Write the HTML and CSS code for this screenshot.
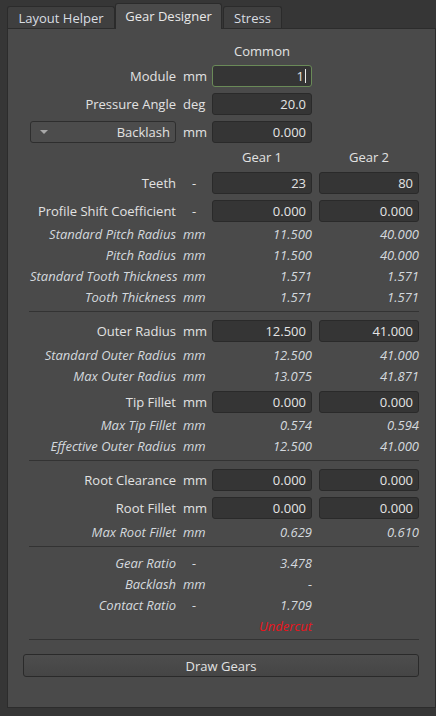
FILE: index.html
```html
<!DOCTYPE html>
<html>
<head>
<meta charset="utf-8">
<link rel="stylesheet" href="styles.css">
</head>
<body>
<div class="tabs">
  <div class="tab">Layout Helper</div>
  <div class="tab tab-active">Gear Designer</div>
  <div class="tab tab-small">Stress</div>
</div>
<div class="panel">
  <div class="row head mt12"><span class="c3">Common</span></div>
  <div class="row in mt4"><span class="lbl">Module</span><span class="unit">mm</span><div class="field focus">1<span class="caret"></span></div></div>
  <div class="row in mt6"><span class="lbl">Pressure Angle</span><span class="unit">deg</span><div class="field">20.0</div></div>
  <div class="row in mt6"><div class="combo"><span class="arrow"></span><span>Backlash</span></div><span class="unit">mm</span><div class="field">0.000</div></div>
  <div class="row head mt4"><span class="c3">Gear 1</span><span class="c4">Gear 2</span></div>
  <div class="row in mt5"><span class="lbl">Teeth</span><span class="unit">-</span><div class="field">23</div><div class="field">80</div></div>
  <div class="row in mt6"><span class="lbl">Profile Shift Coefficient</span><span class="unit">-</span><div class="field">0.000</div><div class="field">0.000</div></div>
  <div class="row ro mt1"><span class="lbl">Standard Pitch Radius</span><span class="unit">mm</span><span class="val">11.500</span><span class="val">40.000</span></div>
  <div class="row ro"><span class="lbl">Pitch Radius</span><span class="unit">mm</span><span class="val">11.500</span><span class="val">40.000</span></div>
  <div class="row ro"><span class="lbl">Standard Tooth Thickness</span><span class="unit">mm</span><span class="val">1.571</span><span class="val">1.571</span></div>
  <div class="row ro"><span class="lbl">Tooth Thickness</span><span class="unit">mm</span><span class="val">1.571</span><span class="val">1.571</span></div>
  <div class="sep mt4"></div>
  <div class="row in mt8"><span class="lbl">Outer Radius</span><span class="unit">mm</span><div class="field">12.500</div><div class="field">41.000</div></div>
  <div class="row ro mt2"><span class="lbl">Standard Outer Radius</span><span class="unit">mm</span><span class="val">12.500</span><span class="val">41.000</span></div>
  <div class="row ro"><span class="lbl">Max Outer Radius</span><span class="unit">mm</span><span class="val">13.075</span><span class="val">41.871</span></div>
  <div class="row in mt5"><span class="lbl">Tip Fillet</span><span class="unit">mm</span><div class="field">0.000</div><div class="field">0.000</div></div>
  <div class="row ro mt1"><span class="lbl">Max Tip Fillet</span><span class="unit">mm</span><span class="val">0.574</span><span class="val">0.594</span></div>
  <div class="row ro"><span class="lbl">Effective Outer Radius</span><span class="unit">mm</span><span class="val">12.500</span><span class="val">41.000</span></div>
  <div class="sep mt4"></div>
  <div class="row in mt8"><span class="lbl">Root Clearance</span><span class="unit">mm</span><div class="field">0.000</div><div class="field">0.000</div></div>
  <div class="row in mt6"><span class="lbl">Root Fillet</span><span class="unit">mm</span><div class="field">0.000</div><div class="field">0.000</div></div>
  <div class="row ro mt2"><span class="lbl">Max Root Fillet</span><span class="unit">mm</span><span class="val">0.629</span><span class="val">0.610</span></div>
  <div class="sep mt4"></div>
  <div class="row ro mt5"><span class="lbl">Gear Ratio</span><span class="unit">-</span><span class="val">3.478</span></div>
  <div class="row ro"><span class="lbl">Backlash</span><span class="unit">mm</span><span class="val">-</span></div>
  <div class="row ro"><span class="lbl">Contact Ratio</span><span class="unit">-</span><span class="val">1.709</span></div>
  <div class="row ro"><span class="lbl"></span><span class="unit"></span><span class="val warn">Undercut</span></div>
  <div class="sep mt3"></div>
  <div class="button">Draw Gears</div>
</div>
</body>
</html>
```
FILE: styles.css
```css
html, body {
  margin: 0;
  padding: 0;
}
body {
  background: #363636;
  width: 436px;
  height: 716px;
  overflow: hidden;
  font-family: "Open Sans", "Noto Sans", sans-serif;
  font-size: 13px;
  color: #e2e2e2;
}
.tabs {
  display: flex;
  align-items: flex-end;
  height: 28px;
  padding-left: 7px;
}
.tab {
  box-sizing: border-box;
  width: 108px;
  height: 22px;
  border: 1px solid #2b2b2b;
  border-bottom: none;
  border-radius: 3px 3px 0 0;
  background: #3f3f3f;
  color: #d9dde2;
  display: flex;
  align-items: center;
  justify-content: center;
  font-size: 13px;
}
.tab-active {
  width: 107px;
  background: #4a4a4a;
  color: #e8e8e8;
  margin-bottom: -1px;
  height: 26px;
  position: relative;
  z-index: 1;
  padding-bottom: 1px;
}
.tab-small {
  width: 59px;
  margin-left: 1px;
}
.panel {
  box-sizing: border-box;
  width: 429px;
  height: 680px;
  margin-left: 7px;
  border: 1px solid #2c2c2c;
  background: #4a4a4a;
  display: flex;
  flex-direction: column;
}
.row {
  display: grid;
  grid-template-columns: 146px 22px 100px 100px;
  column-gap: 7px;
  margin-left: 22px;
  align-items: center;
}
.row.in { height: 22px; }
.row.ro { height: 21px; font-style: italic; color: #d4d9de; }
.row.head { height: 20px; }
.c3 { grid-column: 3; text-align: center; }
.c4 { grid-column: 4; text-align: center; }
.lbl {
  grid-column: 1;
  text-align: right;
  white-space: nowrap;
}
.unit {
  grid-column: 2;
  text-align: center;
  white-space: nowrap;
}
.val {
  text-align: right;
  white-space: nowrap;
}
.warn {
  color: #e8141c;
  grid-column: 3;
}
.field {
  box-sizing: border-box;
  height: 22px;
  background: #353535;
  border: 1px solid #2a2a2a;
  border-radius: 3px;
  padding-right: 5px;
  display: flex;
  align-items: center;
  justify-content: flex-end;
  color: #e4e4e4;
}
.field.focus {
  border-color: #6a8a58;
}
.caret {
  display: inline-block;
  width: 1px;
  height: 14px;
  background: #e8e8e8;
  margin-left: 1px;
}
.combo {
  grid-column: 1;
  box-sizing: border-box;
  height: 22px;
  background: #4c4c4c;
  border: 1px solid #2e2e2e;
  border-radius: 3px;
  display: flex;
  align-items: center;
  justify-content: space-between;
  padding: 0 5px 0 9px;
}
.arrow {
  width: 0;
  height: 0;
  border-left: 4px solid transparent;
  border-right: 4px solid transparent;
  border-top: 4px solid #a8a8a8;
}
.sep {
  height: 1px;
  width: 390px;
  margin-left: 21px;
  background: #333333;
}
.button {
  box-sizing: border-box;
  height: 23px;
  width: 396px;
  margin-left: 15px;
  margin-top: 14px;
  border: 1px solid #2a2a2a;
  border-radius: 3px;
  background: linear-gradient(#4d4d4d, #454545);
  display: flex;
  align-items: center;
  justify-content: center;
  color: #e2e2e2;
}
.mt1 { margin-top: 1px; }
.mt2 { margin-top: 2px; }
.mt3 { margin-top: 3px; }
.mt4 { margin-top: 4px; }
.mt5 { margin-top: 5px; }
.mt6 { margin-top: 6px; }
.mt8 { margin-top: 8px; }
.mt12 { margin-top: 12px; }
```
